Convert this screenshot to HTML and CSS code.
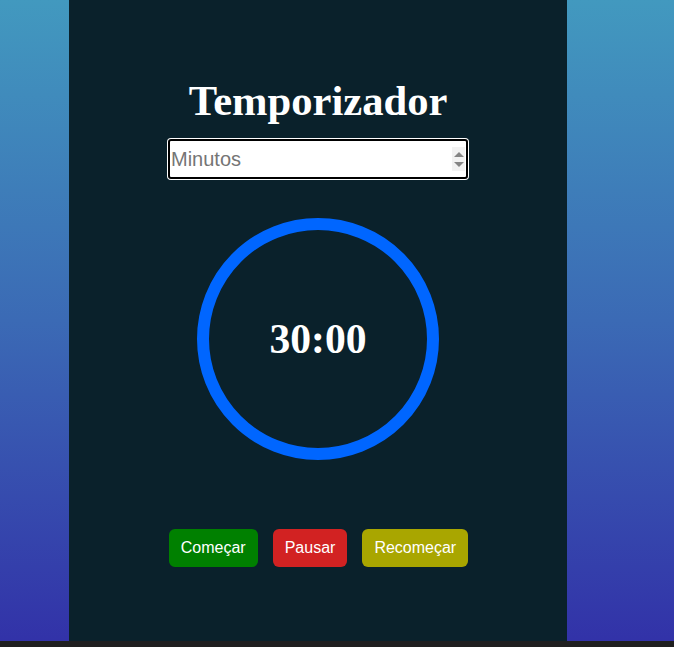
FILE: index.html
```html
<!DOCTYPE html>
<html lang="pt">
<head>
<meta charset="utf-8">
<title>Temporizador</title>
<link rel="stylesheet" href="styles.css">
</head>
<body>
<main class="panel">
  <h1 class="title">Temporizador</h1>
  <div class="field">
    <input class="minutes" type="text" placeholder="Minutos">
    <span class="spin"><span class="up"></span><span class="down"></span></span>
  </div>
  <div class="ring">
    <span class="time">30:00</span>
  </div>
  <div class="actions">
    <button class="btn btn-start">Começar</button>
    <button class="btn btn-pause">Pausar</button>
    <button class="btn btn-reset">Recomeçar</button>
  </div>
</main>
</body>
</html>
```
FILE: styles.css
```css
html {
  background: #1f1f1f;
}
body {
  margin: 0;
  height: 641px;
  background: linear-gradient(180deg, #4299bf 0%, #3b6ab5 50%, #3232a8 100%);
  display: flex;
}
.panel {
  margin-left: 69px;
  width: 498px;
  height: 641px;
  box-sizing: border-box;
  background: #0a212b;
  display: flex;
  flex-direction: column;
  align-items: center;
  padding-top: 76px;
}
.title {
  margin: 0;
  font-family: "Liberation Serif", "Times New Roman", serif;
  font-weight: bold;
  font-size: 42.6px;
  line-height: normal;
  color: #ffffff;
}
.field {
  position: relative;
  margin-top: 14px;
  width: 300px;
  height: 40px;
}
.minutes {
  display: block;
  width: 300px;
  height: 40px;
  box-sizing: border-box;
  margin: 0;
  border: 2px solid #000;
  border-radius: 3px;
  box-shadow: 0 0 0 1px #fff;
  outline: none;
  padding: 0 0 0 1px;
  font-family: "Liberation Sans", Arial, sans-serif;
  font-size: 20px;
  color: #000;
  background: #fff;
}
.minutes::placeholder {
  color: #757575;
}
.spin {
  position: absolute;
  right: 3px;
  top: 8px;
  width: 13px;
  height: 24px;
  background: #f2f2f2;
  display: flex;
  flex-direction: column;
  align-items: center;
  justify-content: center;
  gap: 5px;
}
.up {
  width: 0;
  height: 0;
  border-left: 5px solid transparent;
  border-right: 5px solid transparent;
  border-bottom: 5px solid #858585;
}
.down {
  width: 0;
  height: 0;
  border-left: 5px solid transparent;
  border-right: 5px solid transparent;
  border-top: 5px solid #858585;
}
.ring {
  margin-top: 39px;
  width: 242px;
  height: 242px;
  box-sizing: border-box;
  border: 12px solid #0066ff;
  border-radius: 50%;
  display: flex;
  align-items: center;
  justify-content: center;
}
.time {
  font-family: "Liberation Serif", "Times New Roman", serif;
  font-weight: bold;
  font-size: 41.6px;
  line-height: normal;
  color: #ffffff;
}
.actions {
  margin-top: 69px;
  margin-left: 1px;
  display: flex;
  gap: 15px;
}
.btn {
  border: none;
  border-radius: 6px;
  padding: 10px 12px;
  height: 38px;
  font-family: "Liberation Sans", Arial, sans-serif;
  font-size: 16px;
  color: #ffffff;
  cursor: pointer;
}
.btn-start {
  background: #008000;
}
.btn-pause {
  background: #d22222;
}
.btn-reset {
  background: #a9a600;
}
```
